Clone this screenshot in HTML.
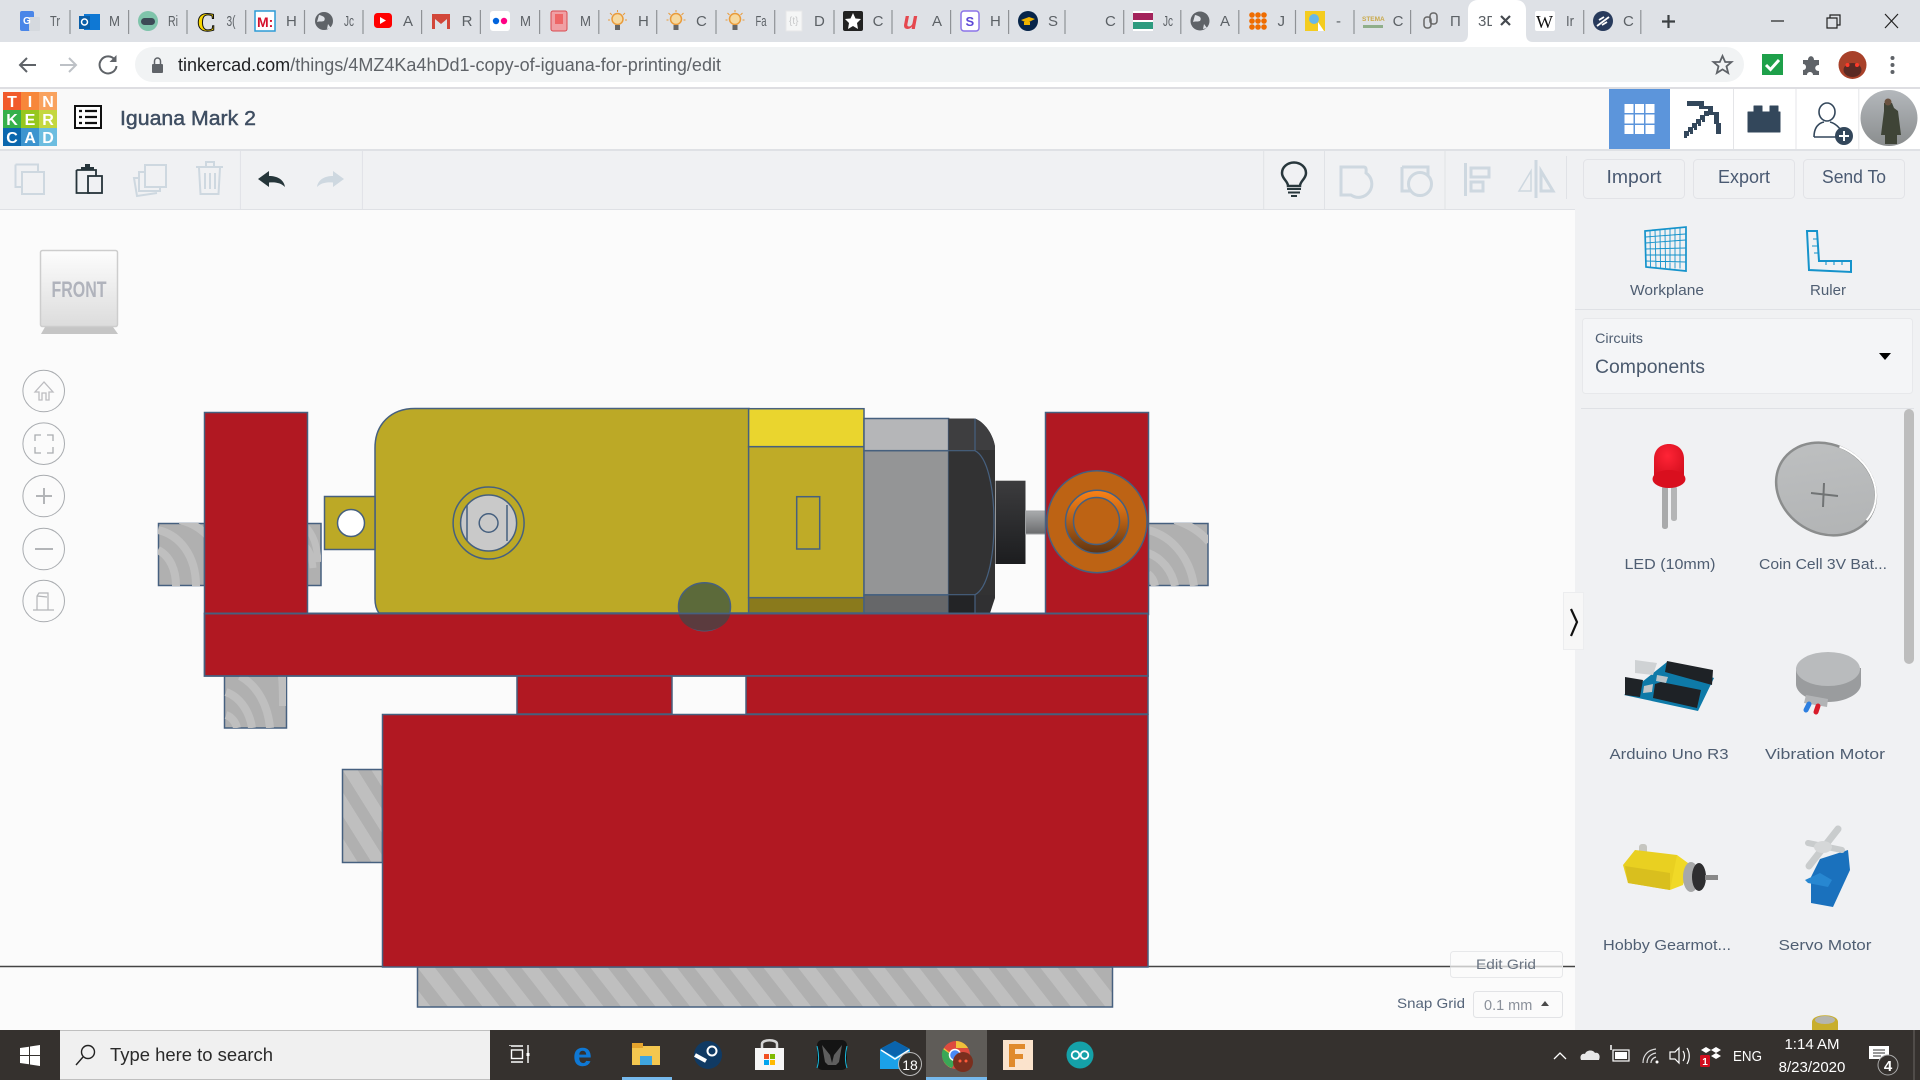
<!DOCTYPE html>
<html><head><meta charset="utf-8"><title>Iguana Mark 2</title>
<style>
html,body{margin:0;padding:0;width:1920px;height:1080px;overflow:hidden;background:#fbfbfb}
svg{display:block;font-family:"Liberation Sans",sans-serif}
.tb{font-size:15px;fill:#5c6166}
.pl{font-size:15px;fill:#4f5e72;text-anchor:middle}
.btn{font-size:18px;fill:#4a5a72;text-anchor:middle}
.tk{fill:#fff;font-size:15px}
</style></head><body>
<svg width="1920" height="1080" viewBox="0 0 1920 1080" xmlns="http://www.w3.org/2000/svg">
<defs>
<pattern id="h1" width="34.6" height="40" patternUnits="userSpaceOnUse" patternTransform="translate(417 967) skewX(38)"><rect width="34.6" height="40" fill="#b0b0b0"/><rect x="0" width="17.3" height="40" fill="#bfbfbf"/></pattern>
<pattern id="h2" width="40" height="46" patternUnits="userSpaceOnUse" patternTransform="translate(342 769) skewY(58)"><rect width="40" height="46" fill="#bfbfbf"/><rect y="0" width="40" height="22" fill="#b0b0b0"/></pattern>
<linearGradient id="cube" x1="0" y1="0" x2="0" y2="1"><stop offset="0" stop-color="#fdfdfd"/><stop offset="1" stop-color="#dcdcdc"/></linearGradient>
<linearGradient id="shaft" x1="0" y1="0" x2="0" y2="1"><stop offset="0" stop-color="#a9abad"/><stop offset="1" stop-color="#6a6b6d"/></linearGradient>
<linearGradient id="hub" x1="0" y1="0" x2="0" y2="1"><stop offset="0" stop-color="#3c3c3e"/><stop offset="1" stop-color="#1c1d1f"/></linearGradient>
<linearGradient id="ring" x1="0" y1="0" x2="0" y2="1"><stop offset="0" stop-color="#fb8217"/><stop offset=".45" stop-color="#bd6314"/><stop offset="1" stop-color="#5e3412"/></linearGradient>
<linearGradient id="av" x1="0" y1="0" x2="0" y2="1"><stop offset="0" stop-color="#b4b8bc"/><stop offset="1" stop-color="#8a8d8e"/></linearGradient>
<radialGradient id="ledg" cx=".45" cy=".35" r=".7"><stop offset="0" stop-color="#ff2436"/><stop offset="1" stop-color="#d40f1e"/></radialGradient>
<linearGradient id="coin" x1="0" y1="0" x2="1" y2="1"><stop offset="0" stop-color="#bfc1c2"/><stop offset="1" stop-color="#b0b2b3"/></linearGradient>
<clipPath id="c1"><rect x="158" y="523" width="46" height="63"/></clipPath>
<clipPath id="c2"><rect x="307" y="523" width="14" height="63"/></clipPath>
<clipPath id="c3"><rect x="224" y="676" width="62" height="52"/></clipPath>
<clipPath id="c4"><rect x="1148" y="523" width="60" height="63"/></clipPath>
<clipPath id="c5"><rect x="1478" y="8" width="14" height="26"/></clipPath>
</defs>

<!-- canvas -->
<rect width="1920" height="1080" fill="#fbfbfb"/>

<!-- chrome tab bar -->
<rect width="1920" height="42" fill="#dee1e6"/>
<g stroke="#8f9296" stroke-width="1.2">
<path d="M70 10V34M128.6 10V34M187 10V34M245.7 10V34M304.5 10V34M363 10V34M421.6 10V34M480.4 10V34M539.6 10V34M598.8 10V34M656.7 10V34M716 10V34M774.7 10V34M834 10V34M892 10V34M950.6 10V34M1008.6 10V34M1065 10V34M1123.7 10V34M1180.8 10V34M1238.8 10V34M1295.5 10V34M1354 10V34M1410.6 10V34M1583.7 10V34M1640.8 10V34"/>
</g>
<path d="M1461 42c5 0 7-3 7-8V10c0-6 4-10 10-10h38c6 0 10 4 10 10v24c0 5 2 8 7 8z" fill="#fff"/>
<!-- favicons -->
<rect x="20" y="11" width="14" height="20" rx="2" fill="#4a86e8"/><rect x="29" y="17" width="11" height="14" rx="1" fill="#d5d9de"/><text x="23" y="24" font-size="10" font-weight="bold" fill="#fff">G</text>
<rect x="84" y="14" width="16" height="16" fill="#0f78d4"/><rect x="79" y="16" width="11" height="13" fill="#0a5ea8"/><circle cx="84.500" cy="22" r="3" fill="none" stroke="#fff" stroke-width="1.500"/>
<circle cx="148" cy="21" r="10" fill="#7fc4ab"/><rect x="141" y="18" width="14" height="7" rx="3.500" fill="#3c4a56"/>
<text x="197" y="31" font-size="26" font-weight="bold" font-family="Liberation Serif" fill="#f6d500" stroke="#111" stroke-width="1">C</text>
<rect x="255" y="11" width="20" height="20" fill="#fff" stroke="#2c9bd6" stroke-width="1.500"/><text x="257" y="27" font-size="14" font-weight="bold" fill="#d4112c">M:</text>
<circle cx="324" cy="21" r="9" fill="#5f6368"/><path d="M319 15c5 1 7 3 5 6-3 1-5 0-7 1M328 24l3 4-4 1z" fill="#dee1e6"/>
<rect x="374" y="13" width="18" height="15" rx="3.500" fill="#f00"/><path d="M380 17l6 3.500-6 3.500z" fill="#fff"/>
<path d="M432 14h18v15h-3V19l-6 5-6-5v10h-3z" fill="#d2473a"/>
<rect x="490" y="11" width="20" height="20" rx="3" fill="#fff"/><circle cx="496" cy="21" r="3.200" fill="#0063dc"/><circle cx="504" cy="21" r="3.200" fill="#ff0084"/>
<rect x="551" y="11" width="16" height="20" rx="2" fill="#f0a0a4" stroke="#d94a50"/><rect x="555" y="14" width="8" height="10" fill="#e66"/>
<g id="bulb"><circle cx="617.500" cy="19" r="5.500" fill="#f6d9a0" stroke="#e99b3a" stroke-width="1.500"/><rect x="615" y="25" width="5" height="5" fill="#666"/><path d="M617.500 10v2M610 13l2 2M625 13l-2 2M608 20h2M627 20h-2" stroke="#e99b3a"/></g>
<use href="#bulb" x="58.500"/><use href="#bulb" x="117.500"/>
<rect x="786" y="11" width="16" height="20" fill="#f5f6f6" stroke="#e6e7e8"/><text x="789" y="24" font-size="10" fill="#c8c9ca">{t}</text>
<rect x="843" y="11" width="20" height="20" rx="2" fill="#222"/><path d="M853 13l2.500 5.500 5.500.5-4 4 1 6-5-3-5 3 1-6-4-4 5.500-.5z" fill="#fff"/>
<text x="903" y="29" font-size="24" font-weight="bold" font-style="italic" fill="#e5484f">u</text>
<rect x="961" y="11" width="18" height="20" rx="3" fill="#fff" stroke="#8b74e8" stroke-width="1.500"/><text x="965.500" y="26" font-size="13" font-weight="bold" fill="#5c47d6">S</text>
<circle cx="1028" cy="21" r="10" fill="#07254a"/><path d="M1021 20l8-3 6 2-8 4z" fill="#f0b400"/><path d="M1024 22v3h6v-3" fill="#f0b400"/>
<rect x="1133" y="11" width="20" height="20" fill="#fff"/><rect x="1133" y="13" width="20" height="7" fill="#a3235b"/><rect x="1133" y="22" width="20" height="7" fill="#2d9b7f"/>
<circle cx="1200" cy="21" r="9.500" fill="#5f6368"/><path d="M1195 15c5 1 7 3 5 6-3 1-5 0-7 1M1204 24l3 4-4 1z" fill="#dee1e6"/>
<g fill="#ef6c00"><circle cx="1252" cy="15" r="2.800"/><circle cx="1258" cy="15" r="2.800"/><circle cx="1264" cy="15" r="2.800"/><circle cx="1252" cy="21" r="2.800"/><circle cx="1258" cy="21" r="2.800"/><circle cx="1264" cy="21" r="2.800"/><circle cx="1252" cy="27" r="2.800"/><circle cx="1258" cy="27" r="2.800"/><circle cx="1264" cy="27" r="2.800"/></g>
<rect x="1305" y="11" width="20" height="20" fill="#f4cc1f"/><circle cx="1314" cy="19" r="5" fill="#67b7e8"/><path d="M1318 22l6 9h-6z" fill="#fff"/>
<text x="1362" y="21" font-size="6.500" font-weight="bold" fill="#c9a94a">STEMA</text><rect x="1363" y="25" width="20" height="3" fill="#8fae8a"/>
<g fill="none" stroke="#666" stroke-width="1.500"><rect x="1424" y="17" width="7" height="11" rx="3"/><rect x="1430" y="13" width="7" height="11" rx="3"/></g>
<path d="M1501 16l9 9M1510 16l-9 9" stroke="#45494f" stroke-width="2.200"/>
<rect x="1535" y="11" width="20" height="20" rx="2" fill="#fff"/><text x="1536" y="28" font-size="18" font-family="Liberation Serif" fill="#111">W</text>
<circle cx="1603" cy="21" r="10" fill="#273a5c"/><path d="M1597 26l12-9M1599 20l5-3M1602 25l5-3" stroke="#fff" stroke-width="1.800"/>
<!-- tab labels -->
<g class="tb">
<text x="50" y="26" textLength="10" lengthAdjust="spacingAndGlyphs">Tr</text><text x="109" y="26" textLength="11" lengthAdjust="spacingAndGlyphs">M</text><text x="168" y="26" textLength="10" lengthAdjust="spacingAndGlyphs">Ri</text><text x="226.500" y="26" textLength="9" lengthAdjust="spacingAndGlyphs">3(</text><text x="286" y="26">H</text><text x="344" y="26" textLength="10" lengthAdjust="spacingAndGlyphs">Jc</text><text x="403" y="26">A</text><text x="461.600" y="26">R</text><text x="520" y="26" textLength="11" lengthAdjust="spacingAndGlyphs">M</text><text x="580" y="26" textLength="11" lengthAdjust="spacingAndGlyphs">M</text><text x="638" y="26">H</text><text x="696" y="26">C</text><text x="755.500" y="26" textLength="11" lengthAdjust="spacingAndGlyphs">Fa</text><text x="814" y="26">D</text><text x="872.600" y="26">C</text><text x="932" y="26">A</text><text x="990" y="26">H</text><text x="1048" y="26">S</text><text x="1105" y="26">C</text><text x="1163" y="26" textLength="10" lengthAdjust="spacingAndGlyphs">Jc</text><text x="1220" y="26">A</text><text x="1277.500" y="26">J</text><text x="1336" y="26">-</text><text x="1392.600" y="26">C</text><text x="1450" y="26">П</text><text x="1478" y="26" clip-path="url(#c5)">3D</text><text x="1566" y="26" textLength="8" lengthAdjust="spacingAndGlyphs">Ir</text><text x="1623" y="26">C</text>
</g>
<path d="M1668.500 15v13M1662 21.500h13" stroke="#3c4043" stroke-width="2.200"/>
<path d="M1771 21h13" stroke="#222" stroke-width="1.200"/>
<path d="M1827 18h10v10h-10zM1830 18v-3h10v10h-3" fill="none" stroke="#222" stroke-width="1.200"/>
<path d="M1885 14l13 14M1898 14l-13 14" stroke="#222" stroke-width="1.200"/>

<!-- address row -->
<rect y="42" width="1920" height="45" fill="#fff"/>
<rect x="135" y="47" width="1609" height="35" rx="17.500" fill="#f1f3f4"/>
<path d="M36 65H21M27 58l-7 7 7 7" fill="none" stroke="#5f6368" stroke-width="2"/>
<path d="M60 65h15M69 58l7 7-7 7" fill="none" stroke="#bdc1c6" stroke-width="2"/>
<path d="M115 60a8.500 8.500 0 1 0 1.500 6" fill="none" stroke="#5f6368" stroke-width="2"/><path d="M116.500 55v7h-7z" fill="#5f6368"/>
<rect x="152" y="64" width="11" height="9" rx="1" fill="#5f6368"/><path d="M154.500 64v-3a3 3 0 0 1 6 0v3" fill="none" stroke="#5f6368" stroke-width="1.500"/>
<text x="178" y="71" font-size="18" fill="#5f6368" textLength="543" lengthAdjust="spacingAndGlyphs"><tspan fill="#202124">tinkercad.com</tspan>/things/4MZ4Ka4hDd1-copy-of-iguana-for-printing/edit</text>
<path d="M1722.500 56l2.700 6h6.300l-5 4.300 1.700 6.700-5.700-3.600-5.700 3.600 1.700-6.700-5-4.300h6.300z" fill="none" stroke="#5f6368" stroke-width="1.800"/>
<rect x="1762" y="54" width="21" height="21" fill="#1ea04a"/><path d="M1766 65l4.500 4.500 8.500-9.500" fill="none" stroke="#fff" stroke-width="3"/>
<path d="M1803 60h5c0-5 6-5 6 0h5v5c-5 0-5 6 0 6v4h-6c0-4-6-4-6 0h-4v-5c4 0 4-6 0-6z" fill="#5f6368"/>
<ellipse cx="1852.500" cy="65" rx="14" ry="14" fill="#a8412a"/><ellipse cx="1852.500" cy="70" rx="9" ry="7" fill="#5a2a24"/><circle cx="1847.500" cy="65" r="2" fill="#ff3a2a"/><circle cx="1857" cy="65" r="2" fill="#ff3a2a"/>
<g fill="#5f6368"><circle cx="1892.500" cy="58" r="2"/><circle cx="1892.500" cy="65" r="2"/><circle cx="1892.500" cy="72" r="2"/></g>
<rect y="87" width="1920" height="2" fill="#dedee2"/>

<!-- tinkercad header -->
<rect y="89" width="1920" height="60" fill="#f9f9f9"/>
<rect x="1670" y="89" width="250" height="60" fill="#fff"/>
<rect y="149" width="1920" height="2" fill="#dfe1e5"/>
<g font-weight="bold" font-size="16" fill="#fff" text-anchor="middle">
<rect x="3" y="92" width="18" height="18" fill="#f15a2b"/><text x="12" y="107">T</text>
<rect x="21" y="92" width="18" height="18" fill="#f7873a"/><text x="30" y="107">I</text>
<rect x="39" y="92" width="18" height="18" fill="#f9a25e"/><text x="48" y="107">N</text>
<rect x="3" y="110" width="18" height="18" fill="#36b04a"/><text x="12" y="125">K</text>
<rect x="21" y="110" width="18" height="18" fill="#96c71d"/><text x="30" y="125">E</text>
<rect x="39" y="110" width="18" height="18" fill="#c4d73f"/><text x="48" y="125">R</text>
<rect x="3" y="128" width="18" height="18" fill="#0b67ae"/><text x="12" y="143">C</text>
<rect x="21" y="128" width="18" height="18" fill="#3c94cf"/><text x="30" y="143">A</text>
<rect x="39" y="128" width="18" height="18" fill="#6cbde0"/><text x="48" y="143">D</text>
</g>
<rect x="75" y="106" width="26" height="22" fill="#fff" stroke="#111" stroke-width="2"/>
<path d="M79 111h3M85 111h12M79 117h3M85 117h12M79 123h3M85 123h12" stroke="#111" stroke-width="2.200"/>
<text x="120" y="125" font-size="20" fill="#3f4e62" stroke="#3f4e62" stroke-width=".45" textLength="136" lengthAdjust="spacingAndGlyphs">Iguana Mark 2</text>
<rect x="1609" y="89" width="61" height="60" fill="#5c95db"/>
<g fill="#fff"><rect x="1624.500" y="104" width="9" height="9"/><rect x="1635" y="104" width="9" height="9"/><rect x="1645.500" y="104" width="9" height="9"/><rect x="1624.500" y="114.500" width="9" height="9"/><rect x="1635" y="114.500" width="9" height="9"/><rect x="1645.500" y="114.500" width="9" height="9"/><rect x="1624.500" y="125" width="9" height="9"/><rect x="1635" y="125" width="9" height="9"/><rect x="1645.500" y="125" width="9" height="9"/></g>
<path d="M1733.500 89V149M1796 89V149M1858.800 89V149" stroke="#e4e5e8"/>
<!-- pickaxe: stepped pixel art -->
<path d="M1687 101h17v5h9v6h6v11h2v11h-5v-10h-2v-9h-6v-6h-9v-3h-12z" fill="#33475b"/>
<g fill="#33475b">
<rect x="1684" y="131" width="5" height="5"/><rect x="1688" y="127" width="5" height="5"/><rect x="1692" y="123" width="5" height="5"/><rect x="1696" y="119" width="5" height="5"/><rect x="1700" y="115" width="5" height="5"/><rect x="1704" y="111" width="5" height="5"/><rect x="1708" y="107" width="4" height="5"/>
<rect x="1684" y="135" width="3" height="3"/><rect x="1690" y="131" width="3" height="3"/><rect x="1694" y="127" width="3" height="3"/><rect x="1698" y="123" width="3" height="3"/><rect x="1702" y="119" width="3" height="3"/>
</g>
<path d="M1748 112h6v-6h8v6h8v-6h8v6h2v20h-32z" fill="#33475b" stroke="#33475b" stroke-linejoin="round" stroke-width="1"/>
<ellipse cx="1827" cy="112" rx="8" ry="9" fill="none" stroke="#33475b" stroke-width="1.600"/>
<path d="M1814 137c0-10 5-14 10-15M1830 122c4 1 7 3 10 7M1814 137h22" fill="none" stroke="#33475b" stroke-width="1.600"/>
<circle cx="1844" cy="136" r="9" fill="#33475b"/><path d="M1844 131v10M1839 136h10" stroke="#fff" stroke-width="2"/>
<ellipse cx="1889" cy="118" rx="28.500" ry="28" fill="url(#av)"/>
<path d="M1884 103h8l2 5 4 3 3 24-4 0 0 9h-12v-9l-4 0 3-24z" fill="#3f4437"/><circle cx="1888" cy="102" r="3.500" fill="#6a5240"/>

<!-- toolbar -->
<rect y="151" width="1575" height="58" fill="#f0f1f3"/>
<rect x="1575" y="151" width="345" height="58" fill="#f0f1f3"/>
<path d="M0 209.500H1575" stroke="#dfe1e5"/>
<path d="M240.400 151V209M362.400 151V209M1263.700 151V209M1324.500 151V209M1445 151V209M1566.500 156V199" stroke="#e0e2e6"/>
<g fill="none" stroke="#ced8e0" stroke-width="2">
<path d="M15.500 164.500H38V171M15.500 164.500V187H22"/><rect x="22" y="172" width="22" height="22"/>
<rect x="145" y="165" width="21" height="22"/><path d="M145 172h-6v19h21v-4M139 178h-5l3 18 20-3"/>
<path d="M196 167h27M206 166v-4h8v4M199 168l1.500 26h18l1.500-26M205 173v16M210 173v16M215 173v16" stroke-width="2"/>
<path d="M1341 167H1364C1367 167 1366 172 1366 173A12 12 0 1 1 1351 195H1341Z" stroke-width="3"/>
<path d="M1402 167h26v8M1402 167v24h10" stroke-width="3"/><circle cx="1420" cy="184" r="11.500" stroke-width="3"/>
<path d="M1465.500 163V196" stroke-width="3"/><rect x="1471" y="168" width="18" height="9" stroke-width="3"/><rect x="1471" y="182" width="12" height="9" stroke-width="3"/>
<path d="M1536 160v38" stroke-width="3"/><path d="M1531 171v20h-12z" stroke-width="1.500"/><path d="M1541 171v20h12z" stroke-width="3"/>
</g>
<g fill="none" stroke="#26343a" stroke-width="1.800"><path d="M76.500 170H96V176M76.500 170V193H90"/><rect x="88" y="176" width="14" height="17"/></g>
<path d="M81 170v-3h4v-3h5v3h4v3z" fill="#26343a"/>
<path d="M258 179l11-8v5c9 0 15 4 16 11-4-4-9-5-16-4.500V187z" fill="#26363a"/>
<path d="M344 179l-11-8v5c-9 0-15 4-16 11 4-4 9-5 16-4.500V187z" fill="#ced8e0"/>
<path d="M1288 186c0-5-6-7-6-13a12 10.500 0 0 1 24 0c0 6-6 8-6 13z" fill="none" stroke="#28373c" stroke-width="2.500"/>
<path d="M1287 189h14M1288 192.500h12M1291 196h6" stroke="#28373c" stroke-width="2"/>
<g fill="none" stroke="#e2e3e7"><rect x="1583.500" y="159.500" width="101" height="39" rx="4"/><rect x="1693.500" y="159.500" width="101" height="39" rx="4"/><rect x="1803.500" y="159.500" width="101" height="39" rx="4"/></g>
<text class="btn" x="1634" y="183" textLength="55" lengthAdjust="spacingAndGlyphs">Import</text><text class="btn" x="1744" y="183" textLength="52" lengthAdjust="spacingAndGlyphs">Export</text><text class="btn" x="1854" y="183" textLength="64" lengthAdjust="spacingAndGlyphs">Send To</text>

<!-- right panel -->
<rect x="1575" y="209" width="345" height="821" fill="#f0f1f3"/>
<g fill="none" stroke="#1593cb" stroke-width="1.700">
<path d="M1645 231l41-4v44l-40-4z"/><path d="M1650 230.500l.5 37M1655 230l1 37.500M1660 229.800l.5 38M1665 229.500l.5 38.500M1670 229v39.500M1675 228.500v40M1680 228v40.500M1645.500 237l40-3M1645.500 243l40-3M1645.500 249l40-1M1645.500 255l40 0M1646 261l40 1" stroke-width=".9"/>
<path d="M1807 231h10l2 30h32v11l-42-2z" stroke-width="2"/><path d="M1817 239h-4M1817 246h-5M1818 253h-4M1826 261v4M1834 261v4M1842 261v4" stroke-width="1.100"/>
</g>
<text class="pl" x="1667" y="295" textLength="74" lengthAdjust="spacingAndGlyphs">Workplane</text><text class="pl" x="1828" y="295" textLength="36" lengthAdjust="spacingAndGlyphs">Ruler</text>
<path d="M1575 309.500H1920" stroke="#dfe1e5"/>
<rect x="1582.500" y="318.500" width="330" height="75" rx="3" fill="#f4f5f7" stroke="#e7e8eb"/>
<text x="1595" y="343" font-size="14" fill="#4f5e72" textLength="48" lengthAdjust="spacingAndGlyphs">Circuits</text>
<text x="1595" y="373" font-size="19" fill="#4b5a6e" textLength="110" lengthAdjust="spacingAndGlyphs">Components</text>
<path d="M1879 353h12l-6 7z" fill="#000"/>
<path d="M1581 408.500H1914" stroke="#dfe1e5"/>
<rect x="1904" y="409" width="10" height="255" rx="5" fill="#bdbdbd"/>
<!-- LED -->
<rect x="1662" y="486" width="6" height="43" rx="2.500" fill="#a9aaab"/><rect x="1671" y="486" width="6" height="35" rx="2.500" fill="#b4b5b6"/>
<path d="M1654 478v-19c0-10 7-15 15-15s15 5 15 15v19z" fill="url(#ledg)"/>
<ellipse cx="1669" cy="479" rx="16.500" ry="9" fill="#d90f1e"/>
<text class="pl" x="1670" y="569" textLength="91" lengthAdjust="spacingAndGlyphs">LED (10mm)</text>
<!-- Coin -->
<ellipse cx="1826" cy="489" rx="52" ry="44" fill="url(#coin)" stroke="#8b8d8d" stroke-width="2.500" transform="rotate(32 1826 489)"/>
<path d="M1815 446A51 43 0 0 1 1877 494" fill="none" stroke="#fff" stroke-width="2" transform="rotate(32 1826 489)"/>
<path d="M1824 483l-1 24M1811 493l27 3" stroke="#707374" stroke-width="2"/>
<text class="pl" x="1823" y="569" textLength="128" lengthAdjust="spacingAndGlyphs">Coin Cell 3V Bat...</text>
<!-- Arduino -->
<path d="M1624 695l74 16 16-33-47-16-25 20z" fill="#0e7aa8"/>
<path d="M1667 661l46 9-1 15-47-13zM1661 682l40 8-4 18-44-10 2-14z" fill="#1e2226"/>
<path d="M1625 677l18 3-3 17-15-2z" fill="#1f2327"/>
<path d="M1635 660l22 3-4 12-18-2z" fill="#cfd2d4"/><path d="M1644 686l9-2-1 8-9 1z" fill="#c2c6c8"/><path d="M1657 675l11 2-2 6-10-2z" fill="#b9c4c9"/>
<text class="pl" x="1669" y="759" textLength="119" lengthAdjust="spacingAndGlyphs">Arduino Uno R3</text>
<!-- Vibration -->
<path d="M1796 668v16c0 10 15 18 32 18s33-8 33-18v-16z" fill="#9a9c9e"/>
<ellipse cx="1828" cy="669" rx="32" ry="17" fill="#b9bbbd"/>
<path d="M1806 695l22 4-1 8-23-4z" fill="#b2b4b6"/>
<path d="M1809 704l-3 6" stroke="#2d7fe0" stroke-width="5" stroke-linecap="round"/><path d="M1818 706l-2 6" stroke="#d81c2a" stroke-width="5" stroke-linecap="round"/>
<text class="pl" x="1825" y="759" textLength="120" lengthAdjust="spacingAndGlyphs">Vibration Motor</text>
<!-- Gearmotor -->
<rect x="1639" y="844" width="8" height="14" rx="3" fill="#c6c6c0"/>
<path d="M1623 865l12-15 42 5 1 18-8 17-42-7z" fill="#e9d021"/><path d="M1625 866l45 7 0 17-42-7z" fill="#d9bf1e"/>
<path d="M1677 855l11 8-5 22-13 5z" fill="#f0d927"/>
<ellipse cx="1691" cy="877" rx="8" ry="15" fill="#a7a8a9"/><ellipse cx="1699" cy="877" rx="7" ry="14" fill="#2e2e30"/><rect x="1705" y="875" width="13" height="5" fill="#888"/>
<text class="pl" x="1667" y="950" textLength="128" lengthAdjust="spacingAndGlyphs">Hobby Gearmot...</text>
<!-- Servo -->
<path d="M1811 877l9-18 28-9 2 20-17 37-22-4z" fill="#1a71bd"/><path d="M1805 880l15-7 12 7-4 7-20-4z" fill="#2787d1"/>
<path d="M1809 866l29-37" stroke="#c9cccd" stroke-width="7" stroke-linecap="round"/><path d="M1808 843l34 7" stroke="#c9cccd" stroke-width="6" stroke-linecap="round"/><ellipse cx="1823" cy="847" rx="9" ry="6" fill="#d5d7d8"/>
<text class="pl" x="1825" y="950" textLength="93" lengthAdjust="spacingAndGlyphs">Servo Motor</text>
<path d="M1812 1030v-8c0-9 26-9 26 0v8z" fill="#c8ae2c"/><ellipse cx="1825" cy="1020" rx="10" ry="4" fill="#b5b5ae"/>

<!-- workplane area -->
<path d="M0 966.500H1575" stroke="#444" stroke-width="1.600"/>
<!-- view cube -->
<path d="M45 327h68l5 7H41z" fill="#c5c5c5"/>
<rect x="40.500" y="250.500" width="77" height="76" rx="2" fill="url(#cube)" stroke="#cdcdcd" stroke-width="1.500"/>
<text x="79" y="297" font-size="22" font-weight="bold" fill="#b0b3bc" text-anchor="middle" textLength="55" lengthAdjust="spacingAndGlyphs">FRONT</text>
<g fill="#fbfbfb" stroke="#a9acb0"><circle cx="43.700" cy="391" r="20.800"/><circle cx="43.700" cy="443.700" r="20.800"/><circle cx="43.700" cy="496" r="20.800"/><circle cx="43.700" cy="549" r="20.800"/><circle cx="43.700" cy="601" r="20.800"/></g>
<path d="M44 382l-9 10h4v8h3v-7h4v7h3v-8h4z" fill="none" stroke="#bcbcc0" stroke-width="1.300"/>
<path d="M35 441v-6h6M47 435h6v6M53 447v6h-6M41 453h-6v-6" fill="none" stroke="#a9acb0" stroke-width="1.300"/>
<path d="M36 496h16M44 488v16" stroke="#b3b5b8" stroke-width="2"/>
<path d="M35 549h18" stroke="#b3b5b8" stroke-width="2"/>
<path d="M33 610h21M37 610v-14l2-3h9v17M37 596l10 1M48 593v4" fill="none" stroke="#b3b5b8" stroke-width="1.200"/>

<!-- model -->
<g stroke="#46607f" stroke-width="1.500">
<!-- wood stubs -->
<rect x="158.500" y="523.500" width="46" height="62" fill="#b0b0b0"/>
<g clip-path="url(#c1)" fill="none" stroke="#bfbfbf" stroke-width="8"><path d="M158 530c22 5 38 26 38 56M158 550c12 6 18 20 18 36M180 520c12 3 20 8 28 16"/></g>
<rect x="307" y="523.500" width="14" height="62" fill="#b0b0b0"/>
<g clip-path="url(#c2)" fill="none" stroke="#bfbfbf" stroke-width="7"><path d="M305 526c8 8 12 18 13 36M305 546c5 5 7 12 8 22"/></g>
<rect x="224.500" y="676" width="62" height="52" fill="#b0b0b0"/>
<g clip-path="url(#c3)" fill="none" stroke="#bfbfbf" stroke-width="8"><path d="M240 676c18 10 28 30 30 52M226 692c16 6 24 22 26 36M226 715c6 2 10 8 11 13M282 676c1 10 1 20 1 30"/></g>
<rect x="1148" y="523.500" width="60" height="62" fill="#b0b0b0"/>
<g clip-path="url(#c4)" fill="none" stroke="#bfbfbf" stroke-width="8"><path d="M1148 530c24 6 42 28 46 56M1148 553c14 5 24 18 27 33M1148 574c4 3 6 7 7 12M1175 520c12 4 24 10 34 22"/></g>
<rect x="342.500" y="769.500" width="40" height="93" fill="url(#h2)"/>
<rect x="417.500" y="967" width="695" height="40" fill="url(#h1)"/>
<!-- red left post -->
<rect x="204.500" y="412.500" width="103" height="201" fill="#b11822"/>
<!-- motor body -->
<path d="M379 613c-3-4-4-8-4-14V448c0-24 16-39.500 40-39.500H749V613z" fill="#bca926"/>
<rect x="324.500" y="496.500" width="50.500" height="53" fill="#bca926"/>
<ellipse cx="351" cy="523" rx="13.500" ry="13.500" fill="#fff"/>
<ellipse cx="488.600" cy="523" rx="35.500" ry="36" fill="none"/>
<ellipse cx="488.600" cy="523" rx="28" ry="28" fill="#c9c9c9"/>
<path d="M467 505v36M507 505v36" fill="none"/>
<ellipse cx="488.600" cy="523" rx="9.400" ry="9.200" fill="none"/>
<rect x="748.600" y="408.700" width="115.400" height="38" fill="#ead52e"/>
<rect x="748.600" y="446.700" width="115.400" height="151" fill="#bfab27"/>
<rect x="748.600" y="597.700" width="115.400" height="15.300" fill="#8a7a1c"/>
<rect x="796.700" y="496.700" width="23" height="52.300" fill="none"/>
<rect x="864" y="418.500" width="84.600" height="32.200" fill="#b5b6b8"/>
<rect x="864" y="450.700" width="84.600" height="144.300" fill="#949596"/>
<rect x="864" y="595" width="84.600" height="18" fill="#666769"/>
<rect x="995.500" y="480.700" width="30" height="83.300" fill="url(#hub)" stroke="none"/>
<path d="M948.600 418.500H975c10 4 18 16 20 28V598l-5 15H948.600z" fill="#323233" stroke="none"/>
<path d="M948.600 418.500H975V450.700H948.600z" fill="#3e3e40" stroke="none"/>
<path d="M975 418.500c10 4 18 16 20 28V450H975z" fill="#3e3e40" stroke="none"/>
<path d="M948.600 595H975v18H948.600z" fill="#232426" stroke="none"/>
<path d="M975 595h20l-5 18h-15z" fill="#303032" stroke="none"/>
<path d="M975 418.500V450.700M975 595V613M864 450.700H975c12 6 19 35 19 72 0 37-7 66-19 72H864" fill="none" stroke-width="1.200"/>
<rect x="1025.500" y="511" width="21" height="23" fill="url(#shaft)" stroke="#a0a2a4" stroke-width="1"/>
<!-- red right post -->
<rect x="1045.500" y="412.500" width="103" height="202" fill="#b11822"/>
<ellipse cx="1097" cy="521.700" rx="50" ry="51" fill="#bd6314"/>
<ellipse cx="1097" cy="521.700" rx="31.500" ry="31.500" fill="url(#ring)"/>
<ellipse cx="1096.500" cy="521" rx="23" ry="23.500" fill="#bd6314"/>
<!-- base bars -->
<rect x="204.500" y="613.500" width="943.500" height="62.500" fill="#b11822" stroke-width="1.800"/>
<ellipse cx="704.500" cy="606.700" rx="26" ry="24" fill="#5c6a3a"/>
<path d="M678.700 613.500h51.600c-1.800 10-12 17.200-25.800 17.200-13.800 0-24-7.200-25.800-17.200z" fill="#5b3b3e" stroke="none"/>
<path d="M204 613.500H1148" stroke-width="1.800" fill="none"/>
<rect x="517" y="676" width="155" height="38" fill="#b11822"/>
<rect x="746" y="676" width="402" height="38" fill="#b11822"/>
<rect x="382.500" y="714.500" width="765.500" height="252.500" fill="#b11822"/>
</g>

<!-- collapse tab -->
<rect x="1563.500" y="592.500" width="20" height="57" fill="#f7f7f7" stroke="#ecedef"/>
<path d="M1571 609l6 13-6 14" fill="none" stroke="#111" stroke-width="2.200"/>

<!-- edit grid -->
<rect x="1450.500" y="951.500" width="112" height="26" rx="3" fill="#fbfbfb" fill-opacity=".75" stroke="#e7e8ea"/>
<path d="M1450 966.500h112" stroke="#c6c6c6" stroke-width="1.600"/>
<text x="1506" y="969" font-size="14" fill="#6a7482" text-anchor="middle" textLength="60" lengthAdjust="spacingAndGlyphs">Edit Grid</text>
<text x="1397" y="1008" font-size="14" fill="#56657a" textLength="68" lengthAdjust="spacingAndGlyphs">Snap Grid</text>
<rect x="1473.500" y="991.500" width="89" height="26" rx="3" fill="#fbfbfb" stroke="#e2e3e6"/>
<text x="1484" y="1010" font-size="14.500" fill="#8a909a">0.1 mm</text>
<path d="M1541 1006l4-5 4 5z" fill="#4a4a4a"/>

<!-- taskbar -->
<rect y="1030" width="1920" height="50" fill="#35312e"/>
<rect x="60" y="1030" width="430" height="50" fill="#f0f0f0"/>
<rect x="60" y="1030" width="430" height="1" fill="#bfbfbf"/><rect x="60" y="1079" width="430" height="1" fill="#bfbfbf"/>
<path d="M20 1048l9-1.300v8.300h-9zM30 1046.500l10-1.500v10h-10zM20 1056h9v8.300l-9-1.300zM30 1056h10v10l-10-1.500z" fill="#fff"/>
<circle cx="88" cy="1052" r="6.500" fill="none" stroke="#222" stroke-width="1.400"/><path d="M83 1057l-7 8" stroke="#222" stroke-width="1.400"/>
<text x="110" y="1061" font-size="18" fill="#2a2a2a" textLength="163" lengthAdjust="spacingAndGlyphs">Type here to search</text>
<g fill="none" stroke="#fff" stroke-width="1.400"><rect x="511.500" y="1050" width="11" height="8.500"/><path d="M511 1046h12M511 1062h12M510 1045v1M528 1045v18"/></g>
<rect x="526.500" y="1053" width="3" height="3" fill="#fff"/>
<text x="573" y="1066" font-size="34" font-weight="bold" fill="#0f78d4">e</text>
<rect x="632" y="1046" width="28" height="19" fill="#f4c74f"/><rect x="632" y="1043" width="11" height="5" fill="#e5a42d"/><rect x="640" y="1056" width="12" height="9" fill="#3fa6e0"/>
<rect x="622" y="1077" width="50" height="3" fill="#76b9ed"/>
<circle cx="708" cy="1055" r="14" fill="#103a63"/><circle cx="712" cy="1051" r="4.500" fill="none" stroke="#fff" stroke-width="2"/><path d="M695 1055l11 6" stroke="#fff" stroke-width="4"/>
<path d="M755 1048h29v22h-29z" fill="#f6f6f6"/><path d="M762 1048v-4c0-5 15-5 15 0v4" fill="none" stroke="#d5d5d5" stroke-width="2.500"/>
<rect x="764" y="1054" width="5" height="5" fill="#f25022"/><rect x="770" y="1054" width="5" height="5" fill="#7fba00"/><rect x="764" y="1060" width="5" height="5" fill="#00a4ef"/><rect x="770" y="1060" width="5" height="5" fill="#ffb900"/>
<rect x="817" y="1040" width="30" height="30" rx="5" fill="#141414"/><path d="M817 1046c2 8 2 16 0 22M847 1046c-2 8-2 16 0 22" stroke="#19b6d8" fill="none"/><path d="M822 1045l8 10 2 8 2-8 8-10-3 17-3 3h-8l-3-3z" fill="#5e5e5e"/>
<path d="M880 1049l15-8 15 8v20h-30z" fill="#1ba1e8"/><path d="M880 1049l15-8 15 8-15 8z" fill="#0a64ad"/><path d="M881 1050l14 9 14-9" fill="none" stroke="#fff" stroke-width="1.500"/>
<circle cx="910" cy="1064" r="11.500" fill="#33302d" stroke="#bbb"/><text x="910" y="1070" font-size="14" fill="#fff" text-anchor="middle">18</text>
<rect x="926" y="1030" width="61" height="50" fill="#5f5c58"/><rect x="926" y="1077" width="61" height="3" fill="#76b9ed"/>
<circle cx="956" cy="1055" r="14" fill="#dd4b3e"/><path d="M956 1041a14 14 0 0 1 12 7h-12zM944 1048a14 14 0 0 0 7 20l6-10z" fill="#f0c03a"/><path d="M943 1049a14 14 0 0 0 9 19l5-9z" fill="#3aa757"/><circle cx="955" cy="1055" r="5.500" fill="#4a8af4" stroke="#fff" stroke-width="1.500"/>
<ellipse cx="963" cy="1062" rx="10" ry="10" fill="#7a2f1e"/><circle cx="960" cy="1061" r="1.500" fill="#ff5a3a"/><circle cx="966" cy="1061" r="1.500" fill="#ff5a3a"/>
<rect x="1003" y="1040" width="30" height="30" fill="#fbe3cc"/><path d="M1009 1044h16v5h-10v5h8v5h-8v8h-6z" fill="#e08a2c"/>
<circle cx="1080" cy="1055" r="13.500" fill="#15a1a8"/><g fill="none" stroke="#fff" stroke-width="1.800"><circle cx="1075.500" cy="1055" r="3.800"/><circle cx="1084.500" cy="1055" r="3.800"/></g>
<path d="M1554 1059l6-6 6 6" fill="none" stroke="#fff" stroke-width="1.300"/>
<path d="M1581 1060c-2-5 2-7 4-6 1-4 8-5 10-1 3-1 6 2 4 7z" fill="#e8e8e8"/>
<rect x="1613" y="1050" width="16" height="11" fill="none" stroke="#fff" stroke-width="1.200"/><rect x="1615" y="1052" width="12" height="7" fill="#fff"/><path d="M1611 1045v5" stroke="#fff" stroke-width="1.500"/>
<path d="M1643 1063c0-8 5-13 13-14M1647 1063c0-5 3-9 9-10M1651 1063c0-3 2-5 5-6" fill="none" stroke="#ddd" stroke-width="1.200"/><circle cx="1657" cy="1062" r="1.500" fill="#fff"/>
<path d="M1670 1052h5l4-4v15l-4-4h-5z" fill="none" stroke="#fff" stroke-width="1.200"/><path d="M1683 1051c2 3 2 7 0 10M1687 1048c3 5 3 11 0 16" fill="none" stroke="#fff" stroke-width="1.200"/>
<g fill="#fff"><path d="M1701 1050l5-3 5 3-5 3zM1711 1050l5-3 5 3-5 3zM1711 1056l5-3 5 3-5 3z"/></g>
<rect x="1700" y="1055" width="10" height="12" rx="1.500" fill="#d10d1e"/><text x="1705" y="1065" font-size="10" font-weight="bold" fill="#fff" text-anchor="middle">1</text>
<text class="tk" x="1733" y="1061" textLength="29" lengthAdjust="spacingAndGlyphs">ENG</text>
<text class="tk" x="1812" y="1049" text-anchor="middle">1:14 AM</text>
<text class="tk" x="1812" y="1072" text-anchor="middle">8/23/2020</text>
<path d="M1869 1046h20v13h-6l-4 4v-4h-10z" fill="#fff"/><path d="M1873 1050h12M1873 1053h12M1873 1056h8" stroke="#333"/>
<circle cx="1888" cy="1065" r="10" fill="#35312e" stroke="#aaa"/><text x="1888" y="1071" font-size="15" font-weight="bold" fill="#fff" text-anchor="middle">4</text>
<path d="M1914 1030v50" stroke="#6a6764"/>
</svg>
</body></html>
